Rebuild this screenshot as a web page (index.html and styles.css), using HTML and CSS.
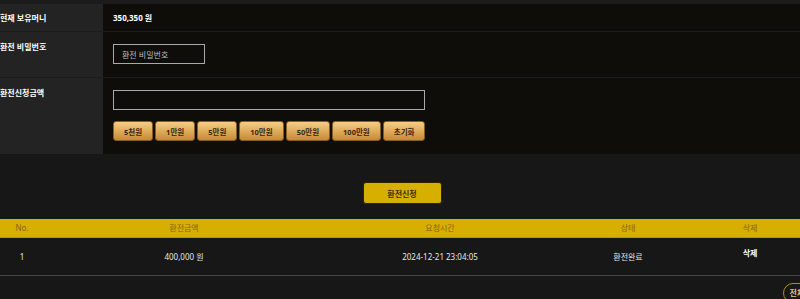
FILE: index.html
```html
<!DOCTYPE html>
<html lang="ko">
<head>
  <meta charset="UTF-8" />
  <meta name="viewport" content="width=device-width, initial-scale=1.0"/>
  <title>환전신청</title>
  <link rel="stylesheet" href="styles.css">
</head>
<body>
  <div class="page">
    <div class="form-table">
      <div class="row row-money">
        <div class="label">현재 보유머니</div>
        <div class="value"><b>350,350 원</b></div>
      </div>
      <div class="row row-pass">
        <div class="label">환전 비밀번호</div>
        <div class="value"><input type="password" class="field short" placeholder="환전 비밀번호" /></div>
      </div>
      <div class="row row-amount">
        <div class="label">환전신청금액</div>
        <div class="value">
          <input type="text" class="field long" />
          <div class="quick">
            <button class="gold">5천원</button>
            <button class="gold">1만원</button>
            <button class="gold">5만원</button>
            <button class="gold">10만원</button>
            <button class="gold">50만원</button>
            <button class="gold">100만원</button>
            <button class="gold">초기화</button>
          </div>
        </div>
      </div>
    </div>

    <div class="submit-wrap">
      <button class="submit">환전신청</button>
    </div>

    <table class="list">
      <thead>
        <tr>
          <th class="c-no">No.</th>
          <th class="c-amt">환전금액</th>
          <th class="c-time">요청시간</th>
          <th class="c-state">상태</th>
          <th class="c-del">삭제</th>
        </tr>
      </thead>
      <tbody>
        <tr>
          <td class="c-no">1</td>
          <td class="c-amt">400,000 원</td>
          <td class="c-time">2024-12-21 23:04:05</td>
          <td class="c-state">환전완료</td>
          <td class="c-del"><span class="del">삭제</span></td>
        </tr>
      </tbody>
    </table>

    <div class="list-foot">
      <button class="del-all">전체삭제</button>
    </div>
  </div>
</body>
</html>
```

FILE: styles.css
```css
* {
  box-sizing: border-box;
}

body {
  margin: 0;
  background: #171717;
  font-family: "Noto Sans", "Noto Sans CJK KR", sans-serif;
  font-size: 8px;
  color: #fff;
  overflow: hidden;
}

.page {
  width: 800px;
  border-top: 4px solid #1b1b1b;
}

.row {
  display: grid;
  grid-template-columns: 103px 1fr;
  border-bottom: 1px solid #1c1c1c;
}

.label {
  background: #232323;
  font-weight: bold;
  padding-left: 0;
  line-height: 10px;
}

.value {
  background: #0e0d0a;
  padding-left: 10px;
}

.row-money {
  height: 28px;
}

.row-money .label,
.row-money .value {
  display: flex;
  align-items: center;
}

.row-pass {
  height: 46px;
}

.row-pass .label {
  padding-top: 10px;
}

.row-pass .value {
  padding-top: 12px;
}

.row-amount {
  height: 76px;
  border-bottom: none;
}

.row-amount .label {
  padding-top: 10px;
}

.row-amount .value {
  padding-top: 12px;
}

.field {
  display: block;
  height: 20px;
  background: transparent;
  border: 1px solid #a9a9a9;
  color: #ddd;
  font-family: inherit;
  font-size: 8px;
  padding: 0 8px;
  outline: none;
}

.field::placeholder {
  color: #bdbdbd;
}

.short {
  width: 92px;
}

.long {
  width: 312px;
}

.quick {
  display: flex;
  gap: 2px;
  margin-top: 11px;
}

.gold {
  height: 20px;
  padding: 0 10px;
  border: 1px solid #8a5c1e;
  border-radius: 3px;
  background: linear-gradient(#f6cd85, #c68b34);
  color: #3b2810;
  font-family: inherit;
  font-size: 7.5px;
  font-weight: bold;
  cursor: pointer;
}

.submit-wrap {
  display: flex;
  justify-content: center;
  padding: 28px 0 15px 4px;
}

.submit {
  width: 79px;
  height: 22px;
  background: #d7af00;
  border: 1px solid #2c2500;
  border-radius: 3px;
  color: #3a3000;
  font-family: inherit;
  font-size: 8px;
  font-weight: bold;
  cursor: pointer;
}

.list {
  width: 100%;
  border-collapse: collapse;
}

.list th {
  height: 18px;
  background: #d8ae00;
  border-bottom: 1px solid #c98f00;
  color: #87680a;
  font-weight: normal;
  padding: 0;
}

.list td {
  height: 38px;
  color: #e6e6e6;
  border-bottom: 1px solid #454545;
  padding: 0;
  text-align: center;
}

.c-no {
  width: 44px;
  text-align: center;
}

.c-amt {
  width: 280px;
}

.c-time {
  width: 232px;
}

.c-state {
  width: 144px;
}

.del {
  display: inline-block;
  padding-bottom: 8px;
  font-weight: bold;
  color: #fff;
}

.list-foot {
  display: flex;
  justify-content: flex-end;
  padding-top: 7px;
  margin-right: -26px;
}

.del-all {
  height: 20px;
  padding: 0 6px;
  background: transparent;
  border: 1px solid #b48c1c;
  border-radius: 10px;
  color: #d9c48a;
  font-family: inherit;
  font-size: 8px;
  font-weight: bold;
}
```
